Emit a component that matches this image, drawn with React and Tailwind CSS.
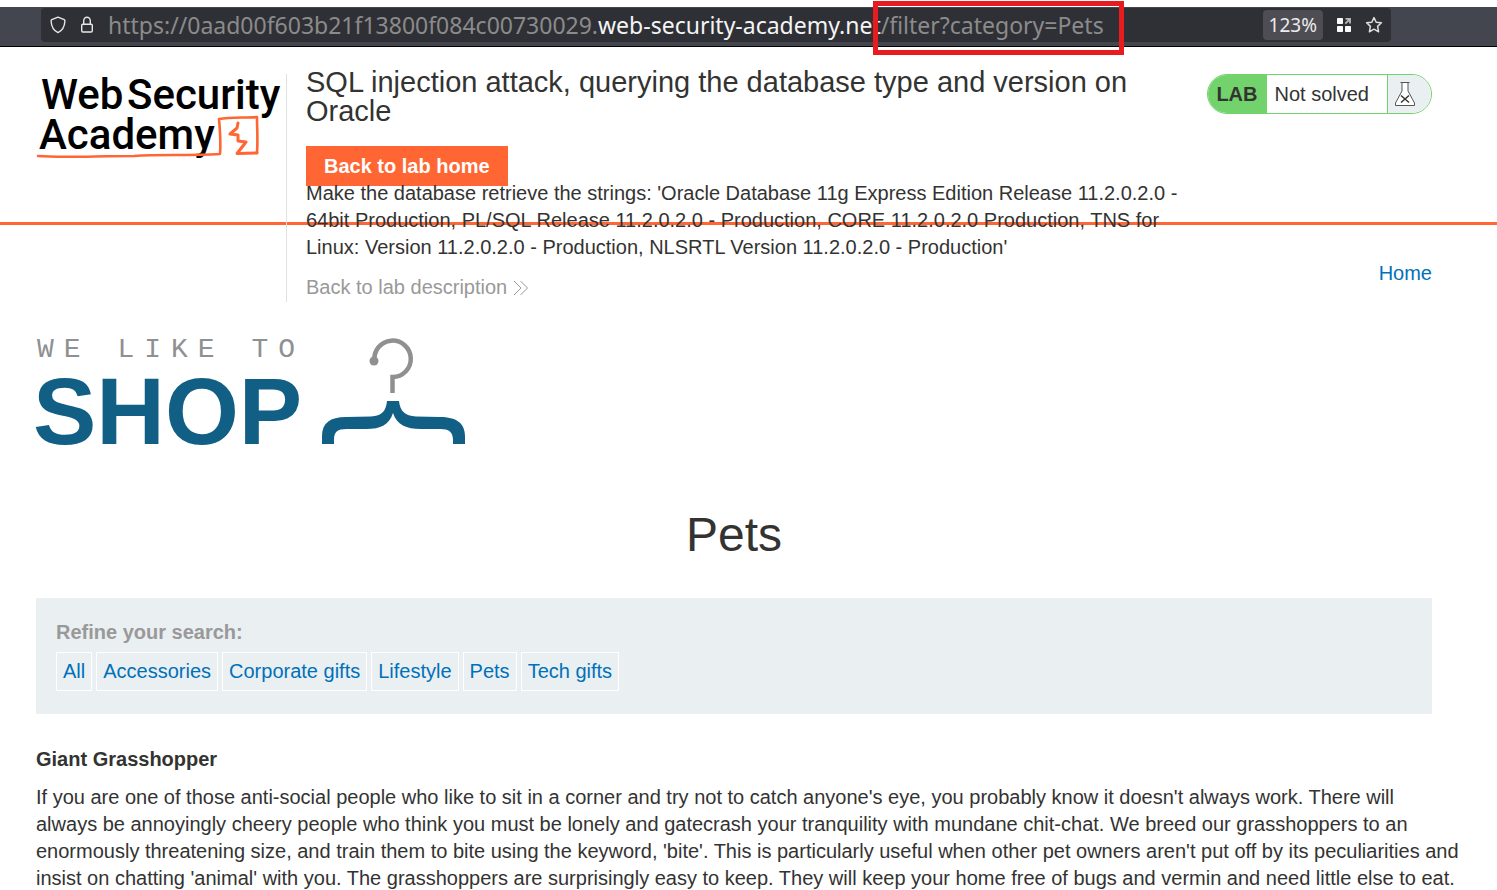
import React from 'react';

const CATEGORIES = ['All', 'Accessories', 'Corporate gifts', 'Lifestyle', 'Pets', 'Tech gifts'];

const AddressBar = () => (
  <div className="mt-[7px] flex h-10 items-start border-b border-black bg-[#43464e] pl-[41px] pr-[106px] pt-px">
    <div className="flex h-[34px] w-full items-center rounded bg-[#2f3036] pl-[9px] pr-2 font-['Noto_Sans',sans-serif] text-[#8b8b8b]">
      <button type="button" aria-label="Tracking protection" className="mr-[14px]">
        <svg width="16" height="18" viewBox="0 0 16 18" fill="none" stroke="#e8e8e8" strokeWidth="1.4" strokeLinejoin="round">
          <path d="M8 1.2 L14.2 3.6 Q15 4 14.9 5 C14.6 10.5 12.5 14.6 8 16.6 C3.5 14.6 1.4 10.5 1.1 5 Q1 4 1.8 3.6 Z" />
        </svg>
      </button>
      <button type="button" aria-label="Connection secure" className="mr-[14px]">
        <svg width="14" height="18" viewBox="0 0 14 18" fill="none" stroke="#e8e8e8" strokeWidth="1.4">
          <rect x="1.7" y="8.2" width="10.6" height="7.8" rx="1.2" />
          <path d="M3.7 8 V4.8 a3.3 3.6 0 0 1 6.6 0 V8" />
        </svg>
      </button>
      <div className="flex-1 whitespace-nowrap text-[23px] leading-[34px]">
        <span>https://0aad00f603b21f13800f084c00730029.</span>
        <span className="text-[#f4f4f4]">web-security-academy.net</span>
        <span className="relative">
          /filter?category=Pets
          <span className="absolute -bottom-[14px] -left-2 -right-5 -top-2 border-[5px] border-[#e81b1e]" />
        </span>
      </div>
      <button type="button" className="mr-[13px] h-[30px] rounded-sm bg-[#4d4d53] px-[6px] text-[19px] leading-[30px] text-[#ececec]">
        123%
      </button>
      <button type="button" aria-label="Extensions" className="mr-3">
        <svg width="17" height="16" viewBox="0 0 17 16">
          <g fill="#fbfbfb">
            <rect x="1" y="1" width="6" height="6" rx="0.8" />
            <rect x="1" y="9" width="6" height="6" rx="0.8" />
            <rect x="9" y="9" width="6" height="6" rx="0.8" />
          </g>
          <path d="M9.5 1.9 H14 V6.5 M14 2 L9.3 6.7" fill="none" stroke="#b9b9bb" strokeWidth="1.8" />
        </svg>
      </button>
      <button type="button" aria-label="Bookmark this page">
        <svg width="18" height="18" viewBox="0 0 18 18" fill="none" stroke="#dedede" strokeWidth="1.5" strokeLinejoin="round">
          <path d="M9 1.6 L11.2 6.2 L16.4 6.8 L12.6 10.4 L13.6 15.8 L9 13.2 L4.4 15.8 L5.4 10.4 L1.6 6.8 L6.8 6.2 Z" />
        </svg>
      </button>
    </div>
  </div>
);

const AcademyLogo = () => (
  <svg width="244" height="90" viewBox="0 0 244 90" className="overflow-visible" role="img" aria-label="Web Security Academy">
    <g className="font-['Roboto',sans-serif] text-[42px] font-medium" fill="#000">
      <text x="5" y="35">Web</text>
      <text x="91" y="35">Security</text>
      <text x="3" y="75">Academy</text>
    </g>
    <g fill="none" stroke="#ff6633" strokeLinecap="round" strokeLinejoin="round">
      <path d="M2 82 C25 84 60 82 98 82 C125 80 150 82 184 80 C185 68 184 56 183 45 C195 43 210 44 221 43 C221 55 222 66 221 79" strokeWidth="2.6" />
      <path d="M221 79 L201 79.5 L210 68 L202 67 L202 61 L194 60 L201 54 L202 49" strokeWidth="3" />
    </g>
  </svg>
);

const ShopLogo = () => (
  <svg width="430" height="110" viewBox="0 0 430 110" className="overflow-visible" role="img" aria-label="We like to shop">
    <text x="1" y="19" fill="#8f9092" className="font-['Liberation_Mono',monospace] text-[28px] tracking-[10px]">
      WE LIKE TO
    </text>
    <text x="-3" y="106" fill="#115f84" className="font-['Liberation_Sans',Arial,sans-serif] text-[95px] font-bold">
      SHOP
    </text>
    <circle cx="338" cy="23" r="4.5" fill="#8f9092" />
    <path d="M338.5 23 A18.2 18.2 0 1 1 356.5 39 V55" fill="none" stroke="#8f9092" strokeWidth="4.5" />
    <path
      d="M351 63 H363 C364 73 369 78 380 78.5 L404 79 C420 79 429 85 429 98 V106 H417 V102 C417 94 413 91 404 91 L385 91 C370 91 361 87 357 75 C353 87 345 91 330 91 L311 91 C301 91 298 94 298 102 V106 H286 V98 C286 85 294 79 310 79 L335 78.5 C346 78 350 73 351 63 Z"
      fill="#115f84"
    />
  </svg>
);

const LabStatus = () => (
  <div className="flex h-10 shrink-0 overflow-hidden rounded-full border border-[#72d36d] leading-[38px]">
    <span className="bg-[#72d36d] pl-2 pr-[9px] font-bold">LAB</span>
    <span className="bg-white pl-2 pr-[18px]">Not solved</span>
    <span className="flex w-11 items-center border-l border-[#72d36d] bg-[#eaeff2] pl-[6px]">
      <svg width="22" height="26" viewBox="0 0 22 26" fill="#fff" stroke="#555555" strokeWidth="1">
        <path d="M8 1.5 V10 L1.5 22 V24.5 H20.5 V22 L14 10 V1.5 Z" />
        <path d="M6.5 1.5 H15.5" />
        <path d="M7 14.5 L15 21.5 M15 14.5 L7 21.5" stroke="#333332" strokeWidth="1.5" />
      </svg>
    </span>
  </div>
);

const LabHeader = () => (
  <header className="flex h-[178px] items-start border-b-[3px] border-[#ff6633] pl-9 pr-[65px]">
    <div className="mt-[27px] flex h-[228px] w-[251px] shrink-0 border-r border-[#e0e0e0] pr-1">
      <AcademyLogo />
    </div>
    <div className="ml-[19px] mt-[21px] flex max-w-[880px] flex-1 flex-col items-start">
      <h2 className="text-[29px] leading-[29px]">
        SQL injection attack, querying the database type and version on Oracle
      </h2>
      <a href="#home" className="mt-5 bg-[#ff6633] px-[18px] font-bold leading-[40px] text-white">
        Back to lab home
      </a>
      <p className="-mt-[6px]">
        Make the database retrieve the strings: 'Oracle Database 11g Express Edition Release 11.2.0.2.0 -
        64bit Production, PL/SQL Release 11.2.0.2.0 - Production, CORE 11.2.0.2.0 Production, TNS for
        Linux: Version 11.2.0.2.0 - Production, NLSRTL Version 11.2.0.2.0 - Production'
      </p>
      <a href="#description" className="mt-[13px] flex items-center gap-[6px] text-[#999999]">
        Back to lab description
        <svg width="16" height="16" viewBox="0 0 16 16" fill="none" stroke="#999999" strokeWidth="1">
          <path d="M1 1 L8 8 L1 15 M7.5 1 L14.5 8 L7.5 15" />
        </svg>
      </a>
    </div>
    <div className="ml-auto mt-[27px]">
      <LabStatus />
    </div>
  </header>
);

const CategoryFilter = () => (
  <section className="mt-[39px] bg-[#eaeff2] px-5 pb-[23px] pt-[21px]">
    <p className="font-bold text-[#999999]">Refine your search:</p>
    <div className="mt-[6px] flex flex-wrap gap-1">
      {CATEGORIES.map((category) => (
        <a
          key={category}
          href={`#${category}`}
          className="border border-white px-[6px] leading-[37px] text-[#0071b9]"
        >
          {category}
        </a>
      ))}
    </div>
  </section>
);

const App = () => (
  <div className="flow-root bg-white font-['Liberation_Sans',Arial,sans-serif] text-[20px] leading-[27px] text-[#333332]">
    <AddressBar />
    <LabHeader />
    <main className="pl-9 pr-[65px]">
      <nav className="flex justify-end pt-[35px]">
        <a href="#home" className="text-[#0071b9]">Home</a>
      </nav>
      <div className="mt-[51px]">
        <ShopLogo />
      </div>
      <h1 className="mt-[63px] text-center text-[48px] leading-[48px]">Pets</h1>
      <CategoryFilter />
      <article className="-mr-7 pt-8">
        <h3 className="font-bold">Giant Grasshopper</h3>
        <p className="mt-[11px]">
          If you are one of those anti-social people who like to sit in a corner and try not to catch anyone's eye, you
          probably know it doesn't always work. There will always be annoyingly cheery people who think you must be
          lonely and gatecrash your tranquility with mundane chit-chat. We breed our grasshoppers to an enormously
          threatening size, and train them to bite using the keyword, 'bite'. This is particularly useful when other pet
          owners aren't put off by its peculiarities and insist on chatting 'animal' with you. The grasshoppers are
          surprisingly easy to keep. They will keep your home free of bugs and vermin and need little else to eat.
        </p>
      </article>
    </main>
  </div>
);

export default App;
